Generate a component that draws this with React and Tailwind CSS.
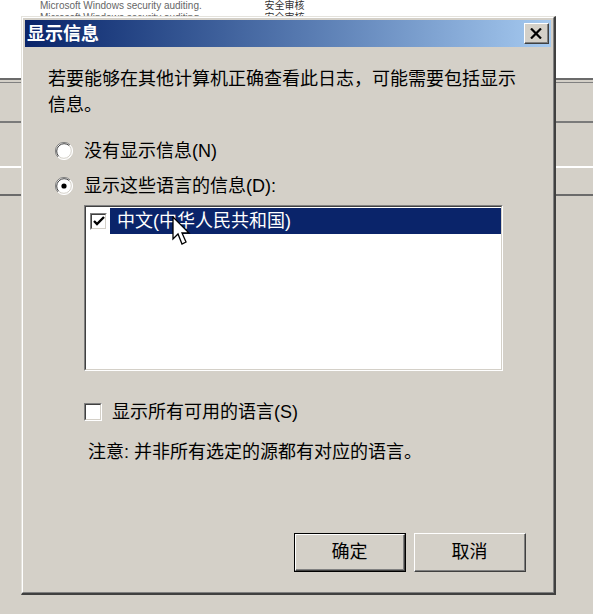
import React from "react";

const FONT = "font-['Liberation_Sans','Noto_Sans_CJK_SC',sans-serif]";

// classic sunken radio
const Radio = ({ checked }) => (
  <svg width="18" height="18" viewBox="0 0 18 18">
    <circle cx="9" cy="9" r="8.5" fill="#fff" />
    <path d="M2.9 15.1 A8.5 8.5 0 0 1 15.1 2.9" fill="none" stroke="#808080" strokeWidth="1" />
    <path d="M15.1 2.9 A8.5 8.5 0 0 1 2.9 15.1" fill="none" stroke="#ffffff" strokeWidth="1" />
    <path d="M3.7 14.3 A7.5 7.5 0 0 1 14.3 3.7" fill="none" stroke="#404040" strokeWidth="1" />
    <path d="M14.3 3.7 A7.5 7.5 0 0 1 3.7 14.3" fill="none" stroke="#d4d0c8" strokeWidth="1" />
    {checked && <circle cx="9" cy="9" r="2.6" fill="#000" />}
  </svg>
);

const Check = ({ checked, size = 18 }) => (
  <div
    className="border-t border-l border-t-[#808080] border-l-[#808080] border-r border-b border-r-white border-b-white shrink-0"
    style={{ width: size, height: size }}
  >
    <div className="w-full h-full border-t border-l border-t-[#404040] border-l-[#404040] border-r border-b border-r-[#d4d0c8] border-b-[#d4d0c8] bg-white flex items-center justify-center">
      {checked && (
        <svg width="12" height="11" viewBox="0 0 12 11">
          <path d="M1 5 L4 8 L11 1" fill="none" stroke="#000" strokeWidth="2.4" />
        </svg>
      )}
    </div>
  </div>
);

const Cursor = () => (
  <svg
    className="absolute left-[172px] top-[216px]"
    width="20"
    height="30"
    viewBox="0 0 20 30"
  >
    <path
      d="M1 1 L1 23 L6 18 L10 28 L14 26 L10 17 L17 17 Z"
      fill="#fff"
      stroke="#000"
      strokeWidth="1.3"
      strokeLinejoin="miter"
    />
  </svg>
);

const Button = ({ children, isDefault }) => (
  <div className={`w-[112px] h-[39px] ${isDefault ? "border border-black" : ""}`}>
    <div className="w-full h-full border-t border-l border-t-white border-l-white border-r border-b border-r-[#404040] border-b-[#404040]">
      <div className="w-full h-full border-r border-b border-r-[#808080] border-b-[#808080] flex items-center justify-center text-[18px] text-black">
        {children}
      </div>
    </div>
  </div>
);

export default function App() {
  return (
    <div className={`relative w-[593px] h-[614px] overflow-hidden bg-[#d4d0c8] ${FONT}`}>
      {/* background window */}
      <div className="h-[78px] bg-white flex flex-col pl-[40px] pt-[0px] text-[10px] leading-[12px] text-[#666]">
        <div className="whitespace-nowrap">
          Microsoft Windows security auditing. <span className="ml-[60px] text-[#333]">安全审核</span>
        </div>
        <div className="whitespace-nowrap">
          Microsoft Windows security auditing. <span className="ml-[60px] text-[#333]">安全审核</span>
        </div>
      </div>
      <div className="h-[5px] border-t-2 border-b border-t-[#6b6b6b] border-b-[#808080]" />
      <div className="h-[40px] border-b-2 border-b-[#7a7a7a]" />
      <div className="h-[45px] border-b-2 border-b-white" />
      <div className="h-[28px] border-b-2 border-b-[#6b6b6b]" />

      {/* dialog */}
      <div className="absolute left-[21px] top-[16px] w-[535px] h-[579px] border-t border-l border-t-[#e4e2dc] border-l-[#e4e2dc] border-r-2 border-b-2 border-r-[#404040] border-b-[#404040] bg-[#d4d0c8]">
        <div className="w-full h-full border-t border-l border-t-white border-l-white border-r border-b border-r-[#808080] border-b-[#808080] p-[2px] flex flex-col">
          {/* title bar */}
          <div className="h-[27px] flex items-center justify-between pl-[2px] pr-[2px] bg-gradient-to-r from-[#0a246a] to-[#a6caf0]">
            <span className="text-white font-bold text-[18px] leading-none">显示信息</span>
            <div className="w-[25px] h-[21px] border-t border-l border-t-white border-l-white border-r border-b border-r-[#404040] border-b-[#404040] bg-[#d4d0c8]">
              <div className="w-full h-full border-r border-b border-r-[#808080] border-b-[#808080] flex items-center justify-center">
                <svg width="12" height="11" viewBox="0 0 12 11">
                  <path d="M1 0.5 L11 10.5 M11 0.5 L1 10.5" stroke="#000" strokeWidth="2.2" />
                </svg>
              </div>
            </div>
          </div>

          {/* body */}
          <div className="flex flex-col pl-[23px] text-[18px] text-black">
            <p className="mt-[19px] leading-[26px]">
              若要能够在其他计算机正确查看此日志，可能需要包括显示
              <br />
              信息。
            </p>

            <div className="mt-[20px] h-[26px] flex items-center pl-[7px] gap-[11px]">
              <Radio />
              <span>没有显示信息(N)</span>
            </div>
            <div className="mt-[9px] h-[26px] flex items-center pl-[7px] gap-[11px]">
              <Radio checked />
              <span>显示这些语言的信息(D):</span>
            </div>

            <div className="ml-[36px] mt-[6px] w-[419px] h-[166px] border-t border-l border-t-[#808080] border-l-[#808080] border-r border-b border-r-white border-b-white">
              <div className="w-full h-full border-t border-l border-t-[#404040] border-l-[#404040] border-r border-b border-r-[#d4d0c8] border-b-[#d4d0c8] bg-white pt-[1px]">
                <div className="flex items-center h-[26px] pl-[4px]">
                  <Check checked size={17} />
                  <div className="ml-[3px] flex-1 h-full bg-[#0a246a] text-white flex items-center pl-[7px]">
                    中文(中华人民共和国)
                  </div>
                </div>
              </div>
            </div>

            <div className="mt-[28px] ml-[36px] h-[26px] flex items-center gap-[10px]">
              <Check />
              <span>显示所有可用的语言(S)</span>
            </div>

            <p className="mt-[14px] ml-[40px] leading-[26px]">注意: 并非所有选定的源都有对应的语言。</p>

            <div className="mt-[68px] ml-[246px] flex gap-[8px]">
              <Button isDefault>确定</Button>
              <Button>取消</Button>
            </div>
          </div>
        </div>
      </div>

      <Cursor />
    </div>
  );
}
